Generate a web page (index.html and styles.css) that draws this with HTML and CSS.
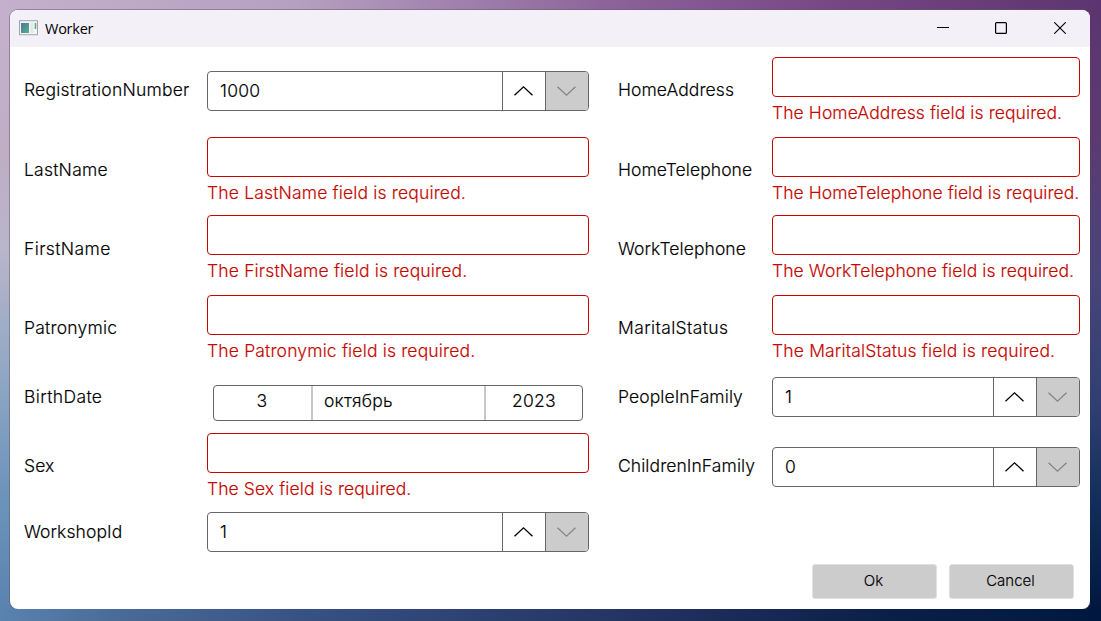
FILE: index.html
```html
<!DOCTYPE html>
<html lang="en">
<head>
<meta charset="utf-8">
<title>Worker</title>
<link rel="stylesheet" href="styles.css">
</head>
<body>
<svg class="defs" width="0" height="0">
  <symbol id="up" viewBox="0 0 20 12"><path d="M.5 10.2 9.5 1.8 18.5 10.2" fill="none" stroke="currentColor" stroke-width="1.3"/></symbol>
  <symbol id="down" viewBox="0 0 20 12"><path d="M.5 1.8 9.5 10.2 18.5 1.8" fill="none" stroke="currentColor" stroke-width="1.3"/></symbol>
  <linearGradient id="pane" x1="0" y1="0" x2="1" y2="1"><stop offset="0" stop-color="#4778a6"/><stop offset="1" stop-color="#58b17f"/></linearGradient>
</svg>
<div class="edge edge-top"></div>
<div class="middle">
<div class="edge edge-left"></div>
<main class="window">
  <header class="titlebar">
    <svg class="app-icon" width="20" height="16" viewBox="0 0 20 16"><rect x=".5" y=".7" width="18" height="14" fill="#f3f5f6" stroke="#9da6ad"/><rect x="2" y="3" width="8" height="10" fill="url(#pane)"/><path d="M11.5 3h3v10h-3z" fill="#e2e7e8"/><path d="M16.5 3v6" stroke="#5aa58c" stroke-width="1.5"/></svg>
    <span class="title">Worker</span>
    <div class="controls">
      <svg width="12" height="12" viewBox="0 0 12 12"><path d="M0 5.5h12" stroke="#000"/></svg>
      <svg width="12" height="12" viewBox="0 0 12 12"><rect x=".6" y=".6" width="10.8" height="10.8" rx="1" fill="none" stroke="#000" stroke-width="1.2"/></svg>
      <svg width="12" height="12" viewBox="0 0 12 12"><path d="M.3.3 11.7 11.7M11.7.3.3 11.7" stroke="#000" stroke-width="1.1"/></svg>
    </div>
  </header>
  <form class="form">
    <div class="label raised wide">RegistrationNumber</div>
    <div class="numeric"><span class="value">1000</span><span class="spin"><svg><use href="#up"/></svg></span><span class="spin off"><svg><use href="#down"/></svg></span></div>
    <div class="label raised">HomeAddress</div>
    <div class="field"><div class="box"></div><div class="error">The HomeAddress field is required.</div></div>

    <div class="label wide">LastName</div>
    <div class="field"><div class="box"></div><div class="error medium">The LastName field is required.</div></div>
    <div class="label">HomeTelephone</div>
    <div class="field"><div class="box"></div><div class="error snug">The HomeTelephone field is required.</div></div>

    <div class="label wider">FirstName</div>
    <div class="field"><div class="box"></div><div class="error medium">The FirstName field is required.</div></div>
    <div class="label">WorkTelephone</div>
    <div class="field"><div class="box"></div><div class="error">The WorkTelephone field is required.</div></div>

    <div class="label wide">Patronymic</div>
    <div class="field"><div class="box"></div><div class="error medium">The Patronymic field is required.</div></div>
    <div class="label wider">MaritalStatus</div>
    <div class="field"><div class="box"></div><div class="error medium">The MaritalStatus field is required.</div></div>

    <div class="label wider">BirthDate</div>
    <div class="date"><span class="day">3</span><span class="month">октябрь</span><span class="year">2023</span></div>
    <div class="label">PeopleInFamily</div>
    <div class="numeric"><span class="value">1</span><span class="spin"><svg><use href="#up"/></svg></span><span class="spin off"><svg><use href="#down"/></svg></span></div>

    <div class="label raised">Sex</div>
    <div class="field"><div class="box"></div><div class="error">The Sex field is required.</div></div>
    <div class="label raised">ChildrenInFamily</div>
    <div class="numeric"><span class="value">0</span><span class="spin"><svg><use href="#up"/></svg></span><span class="spin off"><svg><use href="#down"/></svg></span></div>

    <div class="label">WorkshopId</div>
    <div class="numeric"><span class="value">1</span><span class="spin"><svg><use href="#up"/></svg></span><span class="spin off"><svg><use href="#down"/></svg></span></div>
  </form>
  <footer class="actions"><div class="button">Ok</div><div class="button">Cancel</div></footer>
</main>
<div class="edge edge-right"></div>
</div>
<div class="edge edge-bottom"></div>
</body>
</html>
```
FILE: styles.css
```css
* { box-sizing: border-box; }
body { margin: 0; width: 1101px; height: 621px; overflow: hidden; display: flex; flex-direction: column; font: 300 17.5px/22px Inter, sans-serif; color: #000; -webkit-text-stroke: .15px currentColor; }
.defs { position: absolute; }
.middle { display: grid; grid-template-columns: 10px 1080px 11px; height: 599px; background: linear-gradient(90deg, #c4b0cc, #5c3570) top / 100% 50% no-repeat, linear-gradient(90deg, #5a83b0, #001840) bottom / 100% 50% no-repeat; }
.edge-top { height: 10px; background: linear-gradient(90deg, #c4b0cc, #b5a0c0 27%, #8a6098 57%, #764584 77%, #5c3570); }
.edge-bottom { height: 12px; background: linear-gradient(90deg, #5a83b0, #4a6c98 10%, #344f80 30%, #22305f 60%, #0b2048 80%, #001840); }
.edge-left { background: linear-gradient(#c4b0cc, #bfaec4 25%, #b9b5ca 40%, #91a8c4 60%, #6e94bb 80%, #5a83b0); }
.edge-right { background: linear-gradient(#5c3570, #5c3a70 20%, #47447a 45%, #314070 65%, #16305e 80%, #001840); }
.window { display: flex; flex-direction: column; background: #fff; border-radius: 8px; overflow: hidden; box-shadow: 0 0 0 1px #64577080; }
.titlebar { height: 37px; display: flex; align-items: center; padding: 0 24px 2px 9px; background: #f3f0f8; }
.app-icon { margin-top: 1px; }
.title { margin: 2px 0 0 6px; font: 400 14.5px/20px "Open Sans", sans-serif; letter-spacing: -.25px; -webkit-text-stroke: 0; }
.controls { display: flex; gap: 47px; margin-left: auto; }
.controls svg { display: block; }
.controls svg:first-child { margin-right: -1px; }
.form { display: grid; grid-template-columns: 183px 411px 154px 308px; grid-template-rows: 68px 66px 68px 66px 48px 67px 40px; row-gap: 12px; align-items: center; padding: 10px 10px 0 14px; }
.form > :nth-child(4n + 2) { width: 382px; }
.label { white-space: nowrap; letter-spacing: .08px; }
.raised { padding-bottom: 2px; }
.field { align-self: start; }
.box { height: 40px; border: 1px solid #c50500; border-radius: 4px; }
.error { color: #c50500; line-height: 22px; margin-top: 5px; white-space: nowrap; letter-spacing: .09px; }
.snug { letter-spacing: .06px; }
.medium { letter-spacing: .16px; }
.wide { letter-spacing: .22px; }
.wider { letter-spacing: .38px; }
.numeric { height: 40px; border: 1px solid #666; border-radius: 4px; display: flex; overflow: hidden; }
.value { flex: 1; padding-left: 12px; line-height: 38px; letter-spacing: .25px; }
.spin { width: 43px; border-left: 1px solid #666; display: grid; place-items: center; }
.spin svg { width: 20px; height: 12px; }
.off { background: #ccc; color: #858585; }
.form > .date { align-self: end; width: 370px; height: 36px; margin-left: 6px; border: 1px solid #666; border-radius: 4px; display: grid; grid-template-columns: 97px 175px 96px; line-height: 30px; letter-spacing: .25px; }
.day, .year { text-align: center; }
.day { padding-right: 1px; }
.month { border: solid #c8c8c8; border-width: 0 2px; padding-left: 11px; }
.actions { display: flex; justify-content: flex-end; gap: 12px; padding: 12px 16px 0 0; }
.button { width: 125px; height: 35px; padding-right: 2px; border-radius: 3px; border: 1px solid #e0e0e0; background: #ccc; font-size: 15px; line-height: 32px; text-align: center; }
```
